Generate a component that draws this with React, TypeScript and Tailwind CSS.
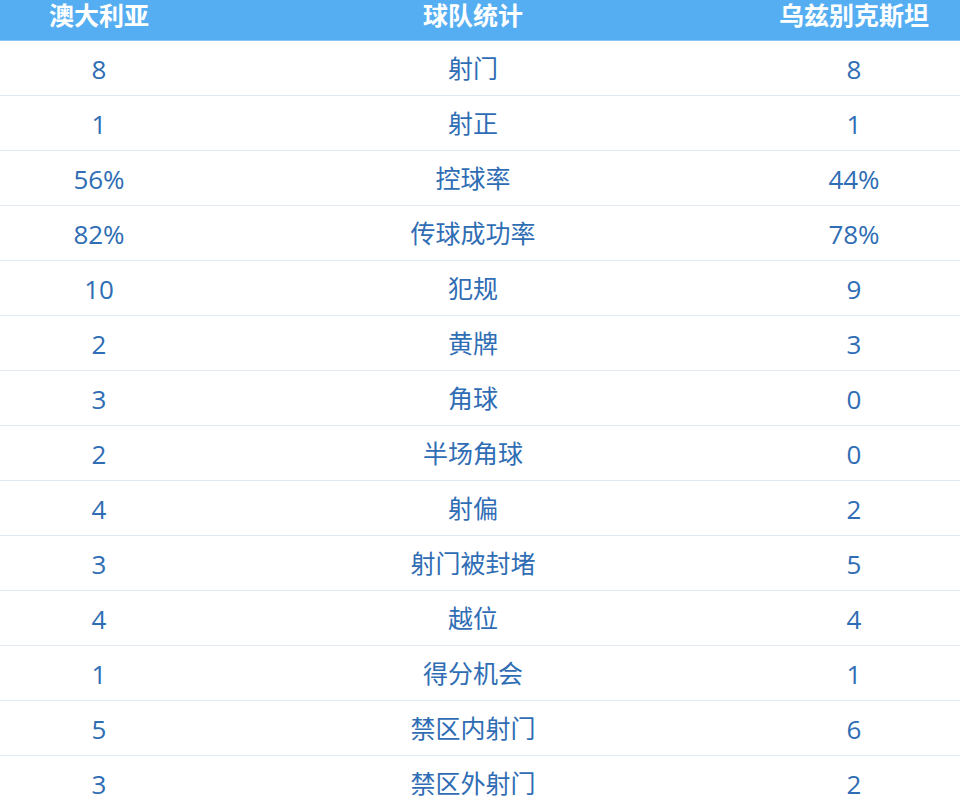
import React from 'react';

const STATS: [string, string, string][] = [
  ['8', '射门', '8'],
  ['1', '射正', '1'],
  ['56%', '控球率', '44%'],
  ['82%', '传球成功率', '78%'],
  ['10', '犯规', '9'],
  ['2', '黄牌', '3'],
  ['3', '角球', '0'],
  ['2', '半场角球', '0'],
  ['4', '射偏', '2'],
  ['3', '射门被封堵', '5'],
  ['4', '越位', '4'],
  ['1', '得分机会', '1'],
  ['5', '禁区内射门', '6'],
  ['3', '禁区外射门', '2'],
];

export default function App() {
  return (
    <div
      className="w-[960px] h-[806px] overflow-hidden bg-white"
      style={{ fontFamily: '"Open Sans", "Noto Sans CJK SC", sans-serif' }}
    >
      {/* Header */}
      <div className="h-[41px] bg-[#56aef2] border-b border-[#8cc6f3] grid grid-cols-[198px_550px_212px] text-white font-bold text-[25px] leading-[31px]">
        <div className="text-center">澳大利亚</div>
        <div className="text-center">球队统计</div>
        <div className="text-center">乌兹别克斯坦</div>
      </div>

      {/* Rows */}
      {STATS.map(([home, label, away]) => (
        <div
          key={label}
          className="h-[55px] pt-[2px] border-b border-[#e1eaf3] grid grid-cols-[198px_550px_212px] items-center text-[#2f6db4]"
        >
          <div className="text-center text-[26px]">{home}</div>
          <div className="text-center text-[25px]">{label}</div>
          <div className="text-center text-[26px]">{away}</div>
        </div>
      ))}
    </div>
  );
}
